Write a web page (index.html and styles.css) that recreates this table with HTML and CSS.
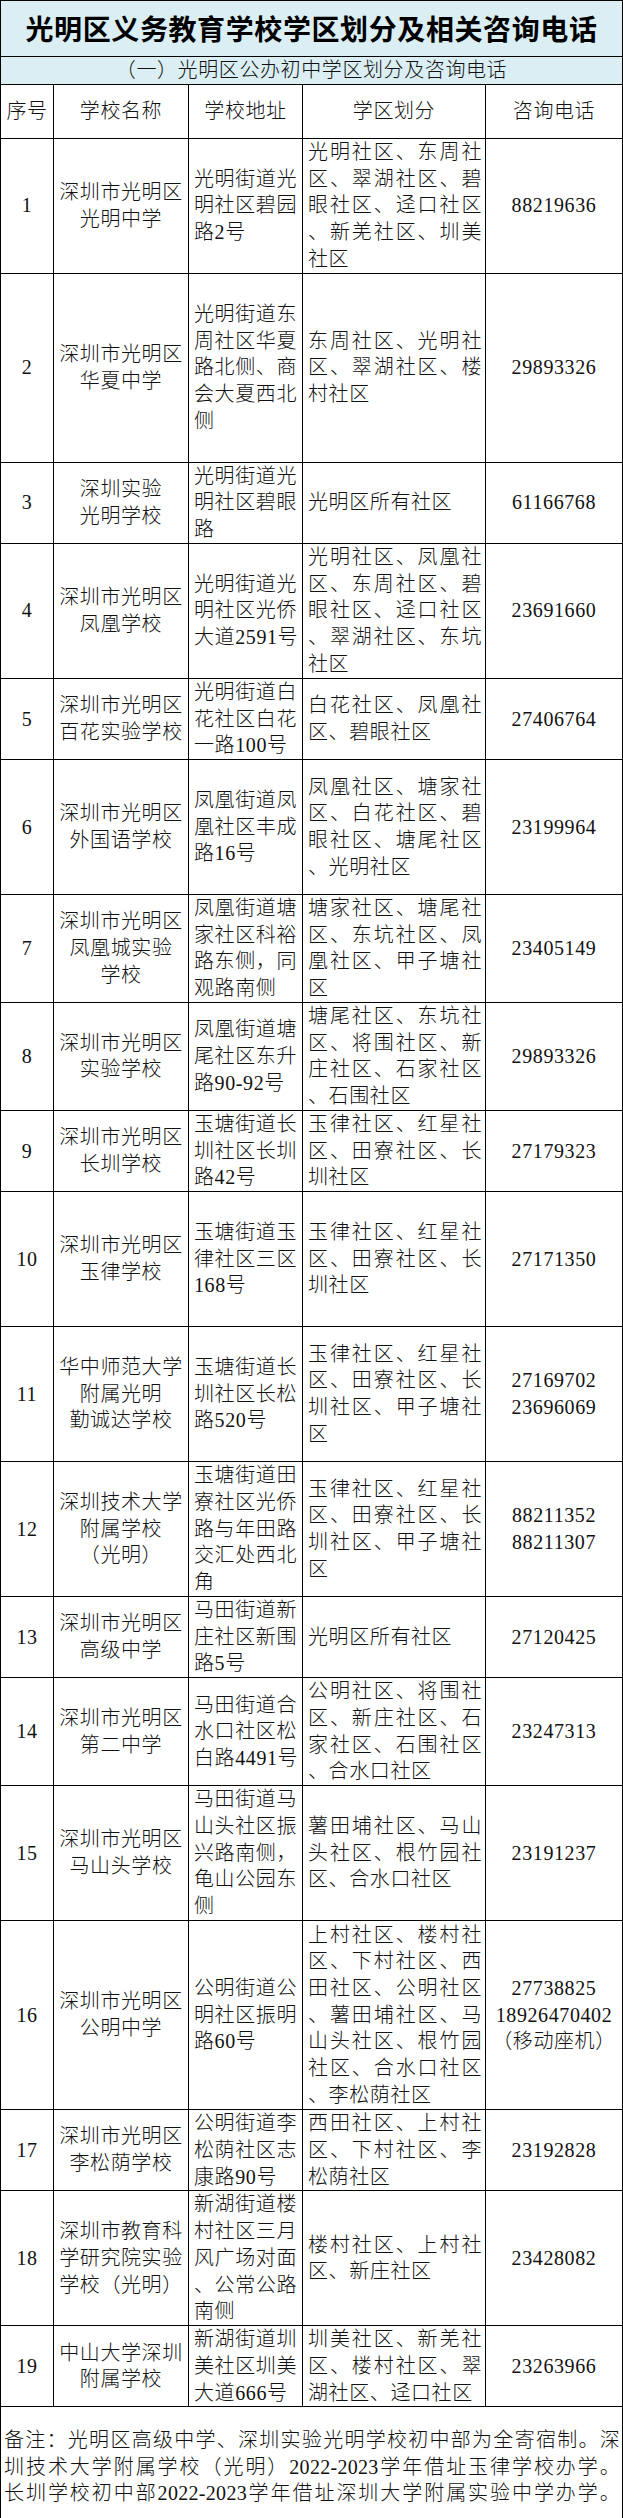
FILE: index.html
```html
<!DOCTYPE html>
<html lang="zh-CN">
<head>
<meta charset="utf-8">
<title>光明区义务教育学校学区划分及相关咨询电话</title>
<link rel="stylesheet" href="styles.css">
</head>
<body>
<table class="sheet">
  <colgroup>
    <col class="c-no">
    <col class="c-name">
    <col class="c-addr">
    <col class="c-area">
    <col class="c-tel">
  </colgroup>
  <tbody>
    <tr class="r-title"><td class="title" colspan="5">光明区义务教育学校学区划分及相关咨询电话</td></tr>
    <tr class="r-sub"><td class="sub" colspan="5">（一）光明区公办初中学区划分及咨询电话</td></tr>
    <tr class="r-head">
      <td class="th">序号</td><td class="th">学校名称</td><td class="th">学校地址</td><td class="th">学区划分</td><td class="th">咨询电话</td>
    </tr>
    <tr class="u5">
      <td class="no">1</td>
      <td class="name">深圳市光明区<br>光明中学</td>
      <td class="addr">光明街道光<br>明社区碧园<br>路2号</td>
      <td class="area">光明社区、东周社区、翠湖社区、碧眼社区、迳口社区、新羌社区、圳美社区</td>
      <td class="tel">88219636</td>
    </tr>
    <tr class="u7">
      <td class="no">2</td>
      <td class="name">深圳市光明区<br>华夏中学</td>
      <td class="addr">光明街道东<br>周社区华夏<br>路北侧、商<br>会大夏西北<br>侧</td>
      <td class="area">东周社区、光明社区、翠湖社区、楼村社区</td>
      <td class="tel">29893326</td>
    </tr>
    <tr class="u3">
      <td class="no">3</td>
      <td class="name">深圳实验<br>光明学校</td>
      <td class="addr">光明街道光<br>明社区碧眼<br>路</td>
      <td class="area">光明区所有社区</td>
      <td class="tel">61166768</td>
    </tr>
    <tr class="u5">
      <td class="no">4</td>
      <td class="name">深圳市光明区<br>凤凰学校</td>
      <td class="addr">光明街道光<br>明社区光侨<br>大道2591号</td>
      <td class="area">光明社区、凤凰社区、东周社区、碧眼社区、迳口社区、翠湖社区、东坑社区</td>
      <td class="tel">23691660</td>
    </tr>
    <tr class="u3">
      <td class="no">5</td>
      <td class="name">深圳市光明区<br>百花实验学校</td>
      <td class="addr">光明街道白<br>花社区白花<br>一路100号</td>
      <td class="area">白花社区、凤凰社区、碧眼社区</td>
      <td class="tel">27406764</td>
    </tr>
    <tr class="u5">
      <td class="no">6</td>
      <td class="name">深圳市光明区<br>外国语学校</td>
      <td class="addr">凤凰街道凤<br>凰社区丰成<br>路16号</td>
      <td class="area">凤凰社区、塘家社区、白花社区、碧眼社区、塘尾社区、光明社区</td>
      <td class="tel">23199964</td>
    </tr>
    <tr class="u4">
      <td class="no">7</td>
      <td class="name">深圳市光明区<br>凤凰城实验<br>学校</td>
      <td class="addr">凤凰街道塘<br>家社区科裕<br>路东侧，同<br>观路南侧</td>
      <td class="area">塘家社区、塘尾社区、东坑社区、凤凰社区、甲子塘社区</td>
      <td class="tel">23405149</td>
    </tr>
    <tr class="u4">
      <td class="no">8</td>
      <td class="name">深圳市光明区<br>实验学校</td>
      <td class="addr">凤凰街道塘<br>尾社区东升<br>路90-92号</td>
      <td class="area">塘尾社区、东坑社区、将围社区、新庄社区、石家社区、石围社区</td>
      <td class="tel">29893326</td>
    </tr>
    <tr class="u3">
      <td class="no">9</td>
      <td class="name">深圳市光明区<br>长圳学校</td>
      <td class="addr">玉塘街道长<br>圳社区长圳<br>路42号</td>
      <td class="area">玉律社区、红星社区、田寮社区、长圳社区</td>
      <td class="tel">27179323</td>
    </tr>
    <tr class="u5">
      <td class="no">10</td>
      <td class="name">深圳市光明区<br>玉律学校</td>
      <td class="addr">玉塘街道玉<br>律社区三区<br>168号</td>
      <td class="area">玉律社区、红星社区、田寮社区、长圳社区</td>
      <td class="tel">27171350</td>
    </tr>
    <tr class="u5">
      <td class="no">11</td>
      <td class="name">华中师范大学<br>附属光明<br>勤诚达学校</td>
      <td class="addr">玉塘街道长<br>圳社区长松<br>路520号</td>
      <td class="area">玉律社区、红星社区、田寮社区、长圳社区、甲子塘社区</td>
      <td class="tel">27169702<br>23696069</td>
    </tr>
    <tr class="u5">
      <td class="no">12</td>
      <td class="name">深圳技术大学<br>附属学校<br>（光明）</td>
      <td class="addr">玉塘街道田<br>寮社区光侨<br>路与年田路<br>交汇处西北<br>角</td>
      <td class="area">玉律社区、红星社区、田寮社区、长圳社区、甲子塘社区</td>
      <td class="tel">88211352<br>88211307</td>
    </tr>
    <tr class="u3">
      <td class="no">13</td>
      <td class="name">深圳市光明区<br>高级中学</td>
      <td class="addr">马田街道新<br>庄社区新围<br>路5号</td>
      <td class="area">光明区所有社区</td>
      <td class="tel">27120425</td>
    </tr>
    <tr class="u4">
      <td class="no">14</td>
      <td class="name">深圳市光明区<br>第二中学</td>
      <td class="addr">马田街道合<br>水口社区松<br>白路4491号</td>
      <td class="area">公明社区、将围社区、新庄社区、石家社区、石围社区、合水口社区</td>
      <td class="tel">23247313</td>
    </tr>
    <tr class="u5">
      <td class="no">15</td>
      <td class="name">深圳市光明区<br>马山头学校</td>
      <td class="addr">马田街道马<br>山头社区振<br>兴路南侧，<br>龟山公园东<br>侧</td>
      <td class="area">薯田埔社区、马山头社区、根竹园社区、合水口社区</td>
      <td class="tel">23191237</td>
    </tr>
    <tr class="u7">
      <td class="no">16</td>
      <td class="name">深圳市光明区<br>公明中学</td>
      <td class="addr">公明街道公<br>明社区振明<br>路60号</td>
      <td class="area">上村社区、楼村社区、下村社区、西田社区、公明社区、薯田埔社区、马山头社区、根竹园社区、合水口社区、李松荫社区</td>
      <td class="tel">27738825<br>18926470402<br>（移动座机）</td>
    </tr>
    <tr class="u3">
      <td class="no">17</td>
      <td class="name">深圳市光明区<br>李松荫学校</td>
      <td class="addr">公明街道李<br>松荫社区志<br>康路90号</td>
      <td class="area">西田社区、上村社区、下村社区、李松荫社区</td>
      <td class="tel">23192828</td>
    </tr>
    <tr class="u5">
      <td class="no">18</td>
      <td class="name">深圳市教育科<br>学研究院实验<br>学校（光明）</td>
      <td class="addr">新湖街道楼<br>村社区三月<br>风广场对面<br>、公常公路<br>南侧</td>
      <td class="area">楼村社区、上村社区、新庄社区</td>
      <td class="tel">23428082</td>
    </tr>
    <tr class="u3">
      <td class="no">19</td>
      <td class="name">中山大学深圳<br>附属学校</td>
      <td class="addr">新湖街道圳<br>美社区圳美<br>大道666号</td>
      <td class="area">圳美社区、新羌社区、楼村社区、翠湖社区、迳口社区</td>
      <td class="tel">23263966</td>
    </tr>
    <tr class="r-note">
      <td class="note" colspan="5">
        <span class="nl">备注：光明区高级中学、深圳实验光明学校初中部为全寄宿制。深</span>
        <span class="nl">圳技术大学附属学校（光明）2022-2023学年借址玉律学校办学。</span>
        <span class="nl">长圳学校初中部2022-2023学年借址深圳大学附属实验中学办学。</span>
      </td>
    </tr>
  </tbody>
</table>
</body>
</html>
```
FILE: styles.css
```css
html, body {
  margin: 0;
  padding: 0;
  background: #ffffff;
}

body {
  font-family: "Liberation Serif", "Noto Sans CJK SC", serif;
  font-size: 20px;
  font-weight: 300;
  color: #111111;
}

.sheet {
  border-collapse: collapse;
  table-layout: fixed;
  width: 623px;
}

.c-no   { width: 53px; }
.c-name { width: 135px; }
.c-addr { width: 114px; }
.c-area { width: 183px; }
.c-tel  { width: 137px; }

.sheet td {
  border: 1px solid #000000;
  padding: 0;
  vertical-align: middle;
  line-height: 26.7px;
  letter-spacing: 0.6px;
}

.r-title { height: 56px; }
.r-sub   { height: 27px; }
.r-head  { height: 54px; }
.u3 { height: 81px; }
.u4 { height: 108px; }
.u5 { height: 135px; }
.u7 { height: 189px; }
.r-note { height: 112px; }

.title {
  background: #daeef3;
  text-align: center;
  font-family: "Noto Sans CJK SC", sans-serif;
  font-weight: 700;
  font-size: 28px;
  letter-spacing: 0;
  padding-top: 4px;
  color: #000000;
}

.sub {
  background: #daeef3;
  text-align: center;
  line-height: 26px;
}

.th {
  text-align: center;
}

.no {
  text-align: center;
}

.name {
  text-align: center;
  white-space: nowrap;
}

.addr {
  text-align: left;
  white-space: nowrap;
  padding: 0 1px 0 5px !important;
}

.area {
  text-align: justify;
  line-break: anywhere;
  word-break: break-all;
  padding: 0 3px 0 5px !important;
}

.tel {
  text-align: center;
  white-space: nowrap;
}

.note {
  padding: 8px 2px 0 3px !important;
  letter-spacing: 0.3px !important;
}

.nl {
  display: block;
  text-align: justify;
  text-align-last: justify;
  white-space: nowrap;
}
```
